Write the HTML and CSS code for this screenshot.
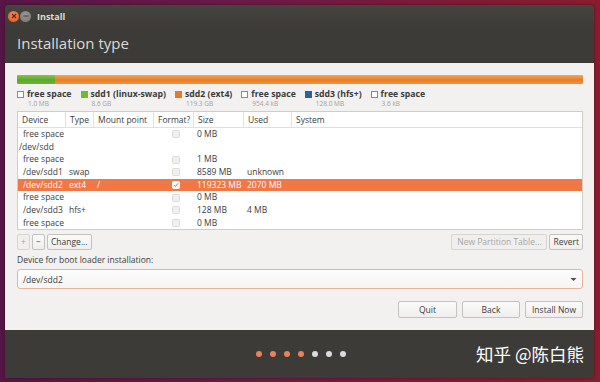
FILE: index.html
```html
<!DOCTYPE html>
<html>
<head>
<meta charset="utf-8">
<link rel="stylesheet" href="styles.css">
</head>
<body>
<div class="window">
  <div class="titlebar">
    <span class="wbtn close"><svg width="10" height="10" viewBox="0 0 10 10"><path d="M3 3l4 4M7 3l-4 4" stroke="#5a2a10" stroke-width="1.2"/></svg></span>
    <span class="wbtn min"><svg width="10" height="10" viewBox="0 0 10 10"><path d="M2.5 5h5" stroke="#3c3b37" stroke-width="1.2"/></svg></span>
    <span class="wtitle">Install</span>
  </div>
  <div class="header">Installation type</div>
  <div class="content">
    <div class="diskbar"><div class="seg green"></div><div class="seg orange"></div></div>
    <div class="legend">
      <div class="litem"><span class="box empty"></span><div><div class="lname">free space</div><div class="lsize">1.0 MB</div></div></div>
      <div class="litem"><span class="box g"></span><div><div class="lname">sdd1 (linux-swap)</div><div class="lsize">8.6 GB</div></div></div>
      <div class="litem"><span class="box o"></span><div><div class="lname">sdd2 (ext4)</div><div class="lsize">119.3 GB</div></div></div>
      <div class="litem"><span class="box empty"></span><div><div class="lname">free space</div><div class="lsize">954.4 kB</div></div></div>
      <div class="litem"><span class="box b"></span><div><div class="lname">sdd3 (hfs+)</div><div class="lsize">128.0 MB</div></div></div>
      <div class="litem"><span class="box empty"></span><div><div class="lname">free space</div><div class="lsize">3.6 kB</div></div></div>
    </div>
    <div class="table">
      <div class="row head">
        <div class="c dev">Device</div><div class="c typ">Type</div><div class="c mnt">Mount point</div><div class="c fmt">Format?</div><div class="c siz">Size</div><div class="c usd">Used</div><div class="c sys">System</div>
      </div>
      <div class="row"><div class="c dev ind">free space</div><div class="c typ"></div><div class="c mnt"></div><div class="c fmt"><span class="chk"></span></div><div class="c siz">0 MB</div><div class="c usd"></div><div class="c sys"></div></div>
      <div class="row"><div class="c dev">/dev/sdd</div></div>
      <div class="row"><div class="c dev ind">free space</div><div class="c typ"></div><div class="c mnt"></div><div class="c fmt"><span class="chk"></span></div><div class="c siz">1 MB</div><div class="c usd"></div><div class="c sys"></div></div>
      <div class="row"><div class="c dev ind">/dev/sdd1</div><div class="c typ">swap</div><div class="c mnt"></div><div class="c fmt"><span class="chk"></span></div><div class="c siz">8589 MB</div><div class="c usd">unknown</div><div class="c sys"></div></div>
      <div class="row sel"><div class="c dev ind">/dev/sdd2</div><div class="c typ">ext4</div><div class="c mnt">/</div><div class="c fmt"><span class="chk on"><svg width="8" height="8" viewBox="0 0 8 8"><path d="M1.3 4.2l1.8 1.8 3.6-4.2" fill="none" stroke="#e95420" stroke-width="1.3"/></svg></span></div><div class="c siz">119323 MB</div><div class="c usd">2070 MB</div><div class="c sys"></div></div>
      <div class="row"><div class="c dev ind">free space</div><div class="c typ"></div><div class="c mnt"></div><div class="c fmt"><span class="chk"></span></div><div class="c siz">0 MB</div><div class="c usd"></div><div class="c sys"></div></div>
      <div class="row"><div class="c dev ind">/dev/sdd3</div><div class="c typ">hfs+</div><div class="c mnt"></div><div class="c fmt"><span class="chk"></span></div><div class="c siz">128 MB</div><div class="c usd">4 MB</div><div class="c sys"></div></div>
      <div class="row"><div class="c dev ind">free space</div><div class="c typ"></div><div class="c mnt"></div><div class="c fmt"><span class="chk"></span></div><div class="c siz">0 MB</div><div class="c usd"></div><div class="c sys"></div></div>
    </div>
    <div class="tools">
      <div class="left">
        <button class="btn sq dis">+</button>
        <button class="btn sq">&minus;</button>
        <button class="btn">Change...</button>
      </div>
      <div class="right">
        <button class="btn dis npt">New Partition Table...</button>
        <button class="btn">Revert</button>
      </div>
    </div>
    <div class="bootlabel">Device for boot loader installation:</div>
    <div class="combo"><span>/dev/sdd2</span><svg width="7" height="5" viewBox="0 0 7 5"><path d="M0.5 1h6l-3 3z" fill="#4c4c4c"/></svg></div>
    <div class="actions">
      <button class="btn act">Quit</button>
      <button class="btn act">Back</button>
      <button class="btn act">Install Now</button>
    </div>
  </div>
  <div class="footer">
    <div class="dots">
      <span class="dot on"></span><span class="dot on"></span><span class="dot on"></span><span class="dot on"></span><span class="dot"></span><span class="dot"></span><span class="dot"></span>
    </div>
    <div class="wm">知乎 @陈白熊</div>
  </div>
</div>
</body>
</html>
```

FILE: styles.css
```css
* { box-sizing: border-box; }
html, body { margin: 0; padding: 0; }
body {
  width: 600px;
  height: 382px;
  overflow: hidden;
  padding: 5px 6px 4px 5px;
  background: linear-gradient(90deg, #561645 0%, #6a1a48 40%, #7d1b36 75%, #8a1c2e 100%);
  font-family: "Open Sans", "Noto Sans", "DejaVu Sans", sans-serif;
}
.window {
  width: 589px;
  height: 373px;
  background: #3c3b37;
  border-radius: 4px 4px 0 0;
  display: flex;
  flex-direction: column;
  box-shadow: 0 0 3px rgba(0,0,0,0.4);
  overflow: hidden;
}
.titlebar {
  height: 22px;
  display: flex;
  align-items: center;
  padding-left: 3px;
  background: linear-gradient(#45443f, #3c3b37);
}
.wbtn {
  width: 11px;
  height: 11px;
  border-radius: 50%;
  display: flex;
  align-items: center;
  justify-content: center;
  margin-right: 1px;
}
.close { background: radial-gradient(circle at 50% 35%, #f58a5a, #e2531c); }
.min { background: radial-gradient(circle at 50% 35%, #9a9993, #74736d); }
.wtitle {
  color: #dfdbd2;
  font-size: 9px;
  font-weight: bold;
  margin-left: 5px;
}
.header {
  height: 36px;
  color: #dcdad5;
  font-size: 15px;
  padding-left: 12px;
  display: flex;
  align-items: center;
  padding-bottom: 4px;
}
.content {
  background: #f2f1f0;
  height: 267px;
  padding: 12px 11px 0 12px;
  color: #3c3c3c;
  font-size: 8.5px;
}
.diskbar {
  height: 9px;
  display: flex;
  border-radius: 1px;
  overflow: hidden;
  box-shadow: inset 0 0 0 1px rgba(0,0,0,0.08);
}
.seg.green { width: 38px; background: linear-gradient(#86c649, #5ca82b 55%, #6ab53a); }
.seg.orange { flex: 1; background: linear-gradient(#f4a55a, #e87d24 55%, #f09341); }
.legend {
  display: flex;
  gap: 9px;
  margin-top: 5px;
  height: 20px;
}
.litem { display: flex; align-items: flex-start; gap: 3px; }
.box {
  width: 7px;
  height: 7px;
  margin-top: 2px;
  display: block;
}
.box.empty { border: 1px solid #8a8a8a; background: #fff; }
.box.g { background: #73b936; }
.box.o { background: #e8792a; }
.box.b { background: #2f5f9e; }
.lname { font-weight: bold; font-size: 8.7px; line-height: 11px; color: #3c3c3c; }
.lsize { font-size: 6.5px; color: #a0a0a0; line-height: 8px; margin-left: 1px; }
.table {
  margin-top: 2px;
  background: #fff;
  border: 1px solid #cfcdca;
  height: 119px;
}
.row {
  display: flex;
  height: 12.7px;
  line-height: 12.7px;
  align-items: center;
  white-space: nowrap;
}
.row.head {
  height: 16px;
  line-height: 16px;
  border-bottom: 1px solid #e2e0dd;
}
.row.head .c { border-right: 1px solid #e4e2df; padding-left: 4px; height: 100%; }
.row.head .c.sys { border-right: none; }
.c { padding-left: 3px; color: #3c3c3c; }
.dev { width: 48px; padding-left: 1px; }
.dev.ind { padding-left: 5px; }
.row.head .dev { padding-left: 4px; }
.typ { width: 28px; }
.mnt { width: 60px; }
.fmt { width: 40px; display: flex; justify-content: center; align-items: center; height: 100%; }
.siz { width: 50px; }
.usd { width: 48px; }
.sys { flex: 1; }
.row.head .fmt { justify-content: flex-start; }
.chk {
  width: 8px;
  height: 8px;
  border: 1px solid #dcdbd8;
  border-radius: 1.5px;
  background: #f1f0ee;
  display: flex;
  align-items: center;
  justify-content: center;
}
.chk.on { background: #fff; border-color: #fff; }
.row.sel { background: #f07746; }
.row.sel .c { color: #fff; }
.tools {
  display: flex;
  justify-content: space-between;
  margin-top: 4px;
  height: 16px;
}
.left, .right { display: flex; gap: 2px; }
.btn {
  font-family: inherit;
  font-size: 8.5px;
  color: #3c3c3c;
  background: linear-gradient(#fbfbfa, #efeeec);
  border: 1px solid #c4c2bf;
  border-radius: 2px;
  padding: 0 3px;
  height: 16px;
  line-height: 14px;
  margin: 0;
}
.btn.sq { width: 13px; padding: 0; text-align: center; }
.btn.dis { color: #a7a6a3; border-color: #d6d5d2; background: #f0efee; }
.npt { width: 96px; }
.bootlabel { margin-top: 4px; line-height: 12px; height: 13px; }
.combo {
  margin-top: 2px;
  height: 20px;
  background: linear-gradient(#fdfcfc, #f6f5f4);
  border: 1px solid #e4b49d;
  border-radius: 3px;
  display: flex;
  justify-content: space-between;
  align-items: center;
  padding: 0 5px 0 5px;
}
.actions {
  display: flex;
  justify-content: flex-end;
  gap: 5px;
  margin-top: 12px;
}
.btn.act { width: 58px; height: 17px; line-height: 15px; }
.btn.act:first-child { width: 59px; }
.footer {
  flex: 1;
  display: flex;
  align-items: center;
  position: relative;
  justify-content: center;
}
.dots { display: flex; gap: 8px; margin-left: 2px; margin-top: 0; }
.dot { width: 6px; height: 6px; border-radius: 50%; background: #dcdcdc; }
.dot.on { background: #e8825a; }
.wm {
  position: absolute;
  right: 10px;
  top: 11px;
  color: #ffffff;
  font-family: "Noto Sans CJK SC", sans-serif;
  font-size: 17.5px;
  letter-spacing: 0;
}
```
